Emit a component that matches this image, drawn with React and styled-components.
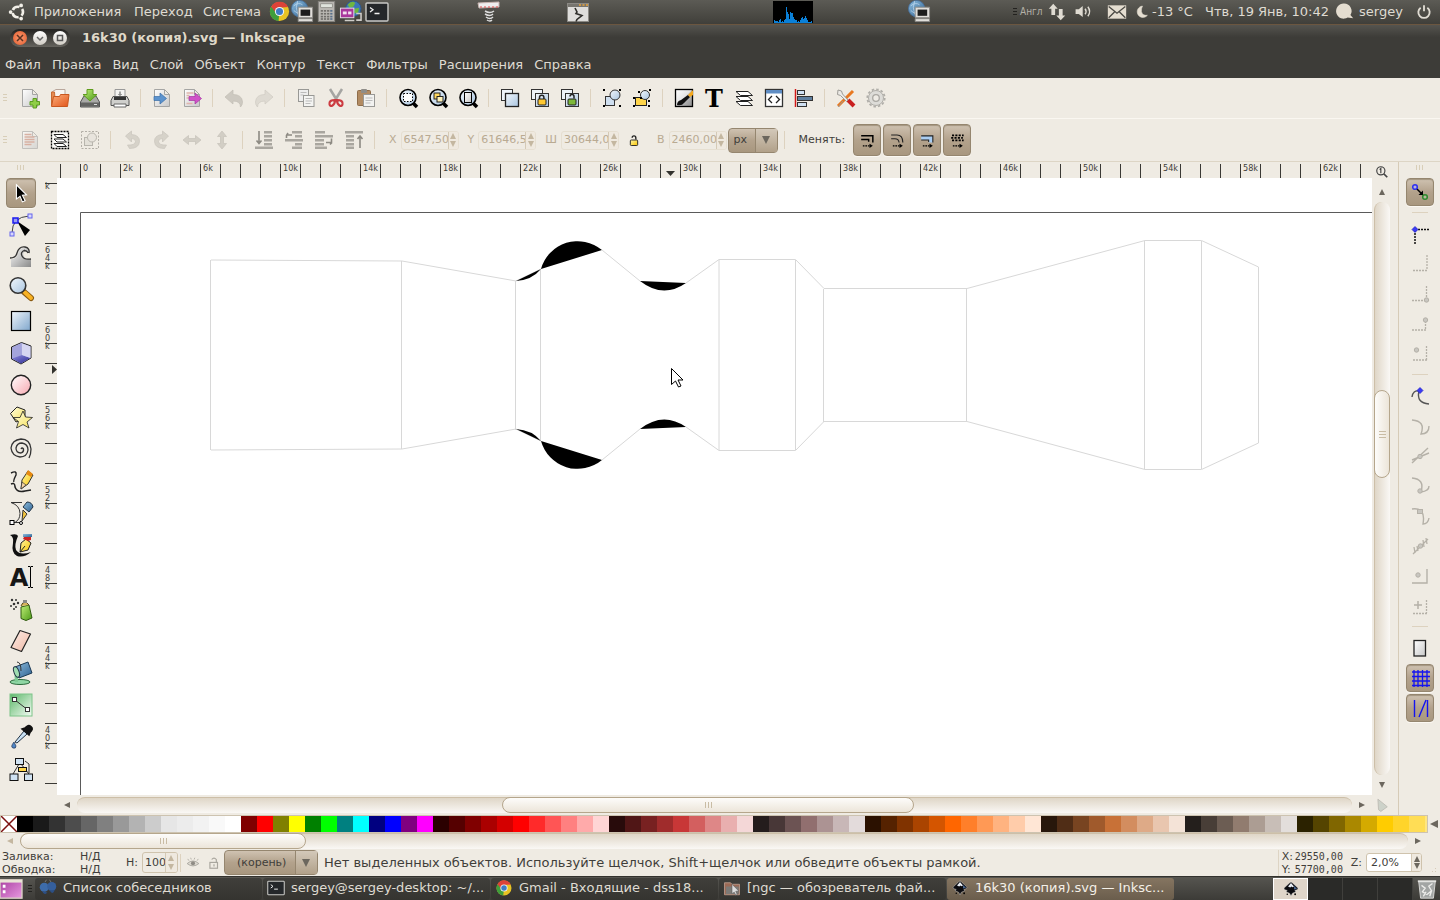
import React from "react";
import styled, { createGlobalStyle, css } from "styled-components";

const Global = createGlobalStyle`
  * { box-sizing: border-box; }
  body { margin: 0; background: #efebe3; overflow: hidden; }
  button, input, select {
    font: inherit; color: inherit; margin: 0; padding: 0; border: 0;
    background: none; border-radius: 0; appearance: none; outline: none; min-width: 0;
  }
  svg { display: block; flex: none; }
`;

const raised = "linear-gradient(#cfc2b1, #b3a28c 50%, #a8977f)";

const Desktop = styled.div`
  display: flex; flex-direction: column; height: 100vh;
  font-family: "DejaVu Sans", sans-serif; font-size: 13px; line-height: 16px;
  color: #3f3e3a; background: #efebe3; white-space: nowrap; cursor: default;
`;

/* ---------- desktop panels ---------- */
const TopPanel = styled.header`
  display: flex; align-items: center; flex: none; height: 25px; padding: 0 8px 1px;
  color: #dfdbd2; background: linear-gradient(#5c5b55, #403f3a);
  border-bottom: 1px solid #6b5640;
`;
const PanelItem = styled.button`
  display: flex; align-items: center; justify-content: flex-start; flex: none;
  height: 23px; width: ${p => p.$w}px; margin-left: ${p => p.$gap || 0}px;
`;
const Spacer = styled.div`flex: 1 1 0;`;
const Layout = styled.span`
  font-family: "DejaVu Sans Condensed", "DejaVu Sans", sans-serif; font-size: 10px; color: #b5b1a8;
`;
const PanelGrip = styled.span`
  flex: none; width: 4px; height: 7px; margin: 0 3px;
  background: repeating-linear-gradient(#23221f 0 1px, transparent 1px 3px);
`;

const BottomPanel = styled.footer`
  display: flex; align-items: center; flex: none; height: 24px;
  background: linear-gradient(#565550, #3c3b37); border-top: 1px solid #33322e; color: #dfdbd2;
`;
const Task = styled.button`
  display: flex; align-items: center; flex: 0 1 227px; height: 22px; margin-right: 1px; padding: 0 0 1px 4px; gap: 6px;
  border-radius: 3px; text-align: left; overflow: hidden;
  background: ${p => (p.$active ? "linear-gradient(#857561, #6a5d4c)" : "linear-gradient(#403f3b, #353430)")};
  color: ${p => (p.$active ? "#f4f0e8" : "#dfdbd2")};
`;
const Workspace = styled.button`
  display: flex; align-items: center; justify-content: center; width: 35px; height: 22px;
  background: ${p => (p.$active ? "#dfd5c9" : "#2a2a28")};
  border: ${p => (p.$active ? "1px solid #fff" : "0")};
  border-right: ${p => (p.$active ? "1px solid #fff" : "1px solid #403f3c")};
`;

/* ---------- window frame ---------- */
const TitleBar = styled.div`
  display: flex; align-items: center; flex: none; height: 27px; padding: 0 10px 2px; gap: 12px;
  background: linear-gradient(#55544f, #3d3c38 45%); color: #dfd8c8; font-weight: bold;
`;
const WindowButtons = styled.div`
  display: flex; align-items: center; gap: 6px; height: 18px; padding: 0 3px; border-radius: 9px;
  background: linear-gradient(#22211f, #65635d);
`;
const WindowButton = styled.button`
  display: grid; place-items: center; width: 14px; height: 14px; border-radius: 50%;
  background: ${p => (p.$close ? "radial-gradient(#ff9a70, #df5a2c)" : "linear-gradient(#fff, #cfcbc3)")};
`;
const MenuBar = styled.nav`
  display: flex; align-items: center; flex: none; height: 26px; padding: 0 5px; gap: 11px;
  background: #3d3c38; color: #dfdbd2;
`;
const MenuItem = styled.button`height: 24px;`;

/* ---------- toolbars ---------- */
const ToolBar = styled.div`
  display: flex; align-items: center; flex: none; height: ${p => p.$h}px;
  border-bottom: 1px solid ${p => p.$line}; font-size: 11px; line-height: 14px;
`;
const Grip = styled.span`
  flex: none;
  ${p => p.$flat
    ? css`width: 8px; height: 5px; margin: 3px auto 7px; background: repeating-linear-gradient(90deg, #d8ceb8 0 1px, transparent 1px 3px);`
    : css`width: 4px; height: 8px; margin: 0 8px 0 3px; background: repeating-linear-gradient(#d8ceb8 0 1px, transparent 1px 3px);`}
`;
const Rule = styled.span`
  flex: none; background: #ddd2bf;
  ${p => p.$flat
    ? css`width: 16px; height: 1px; margin: 5px auto 6px;`
    : css`width: 1px; height: 18px; margin: 0 ${p.$tight ? 5 : 6}px 0 ${p.$tight ? 2 : 5}px;`}
`;
const ToolButton = styled.button`
  display: grid; place-items: center; flex: none; width: 30px; height: 32px;
  opacity: ${p => (p.disabled ? 0.6 : 1)};
`;
const PressedButton = styled.button`
  display: grid; place-items: center; flex: none;
  width: ${p => p.$w || 28}px; height: ${p => p.$h || 28}px; margin: 1px;
  background: ${raised}; border: 1px solid #95866f; border-radius: 4px;
  box-shadow: inset 0 1px 1px #a39580, 0 1px 0 #fbf8f2;
`;
const Field = styled.label`
  display: flex; align-items: center; gap: 4px;
  margin: 0 ${p => p.$after || 0}px 0 ${p => p.$before || 0}px;
  color: ${p => (p.$dim ? "#b9aa92" : "#3f3e3a")};
`;
const SpinFrame = styled.span`
  display: flex; width: ${p => p.$w}px; height: ${p => p.$h || 19}px;
  border: 1px solid ${p => (p.$faint ? "#e6dfd1" : "#cfc3ad")}; border-radius: 3px; overflow: hidden;
  background: ${p => (p.$white ? "#fff" : "transparent")};
`;
const SpinInput = styled.input`
  flex: 1 1 0; width: 0; padding-left: ${p => (p.$pad ? p.$pad : 2)}px; overflow: hidden;
`;
const SpinKeys = styled.span`
  display: flex; flex-direction: column; justify-content: space-evenly; align-items: center;
  flex: none; width: ${p => p.$w || 10}px; border-left: 1px solid #d5cab6; background: #efe9df;
`;
const Combo = styled.span`
  display: flex; align-items: center; flex: none;
  width: ${p => p.$w}px; height: ${p => p.$h}px; margin-right: ${p => p.$after || 0}px;
  background: ${raised}; border: 1px solid #95866f; border-radius: 4px; color: #3f3e3a;
`;
const ComboSelect = styled.select`
  flex: 1; height: 100%; padding-left: ${p => p.$pad}px;
`;
const ComboArrow = styled.span`
  display: grid; place-items: center; width: 22px; height: 100%; pointer-events: none;
  border-left: 1px solid #95866f; background: linear-gradient(#d3c8b9, #b1a18a);
`;

/* ---------- work area ---------- */
const Work = styled.main`display: flex; flex: 1 1 0; min-height: 0;`;
const Toolbox = styled.aside`
  display: flex; flex-direction: column; align-items: center; flex: none; width: 45px; padding: 0 3px 0 0;
`;
const Center = styled.section`display: flex; flex-direction: column; flex: 1 1 0; min-width: 0;`;
const rulerType = css`
  font-family: "DejaVu Sans Condensed", "DejaVu Sans", sans-serif; font-size: 9px; line-height: 8px;
`;
const TopRuler = styled.div`
  position: relative; display: flex; flex: none; height: 16px; padding: 2px 0 0 15px; overflow: hidden;
`;
const TopTick = styled.span`
  flex: none; width: 20px; height: 14px; padding-left: 2px; border-left: 1px solid #3a3935;
  ${rulerType}
`;
const CanvasRow = styled.div`display: flex; flex: 1 1 0; min-height: 0;`;
const SideRuler = styled.div`
  position: relative; display: flex; flex-direction: column; flex: none; width: 12px; overflow: hidden;
  ${rulerType}
`;
const SideStart = styled.span`flex: none; height: 5px; padding-top: 4px;`;
const SideTick = styled.span`
  display: flex; flex-direction: column; flex: none; height: 20px; padding-top: 2px; border-top: 1px solid #3a3935;
`;
const RulerMark = styled.svg`
  position: absolute;
  ${p => (p.$side ? css`left: 7px; top: 187px;` : css`left: 620px; top: 9px;`)}
`;
const Canvas = styled.svg`flex: 1 1 0; width: 0; height: 100%; background: #fff;`;

const ScrollRow = styled.div`
  display: flex; align-items: center; flex: none; height: ${p => p.$h}px;
  padding: 0 ${p => p.$right || 0}px 0 ${p => p.$left || 0}px;
`;
const ScrollArrow = styled.button`
  display: grid; place-items: center; flex: none; width: 20px; height: ${p => (p.$tall ? 20 : 16)}px;
`;
const HTrough = styled.div`
  display: flex; flex: 1 1 0; height: 16px; border-radius: 8px;
  background: linear-gradient(#dfd6c7, #faf8f5); border-top: 1px solid #cdbfa8;
`;
const HSpace = styled.span`flex: ${p => p.$n} 1 0;`;
const thumb = css`
  display: grid; place-items: center; border: 1px solid #b5a68c; border-radius: 8px;
`;
const HThumb = styled.button`
  ${thumb} flex: ${p => p.$n} 1 0; height: 16px; margin-top: -1px;
  background: linear-gradient(#fdfcfa, #ece5d9);
`;
const ThumbMarks = styled.span`
  ${p => p.$flat
    ? css`width: 7px; height: 7px; background: repeating-linear-gradient(#c9bca4 0 1px, transparent 1px 3px);`
    : css`width: 7px; height: 6px; background: repeating-linear-gradient(90deg, #c9bca4 0 1px, transparent 1px 3px);`}
`;
const VScroll = styled.div`
  display: flex; flex-direction: column; align-items: center; flex: none; width: 26px; padding-right: 6px;
`;
const VTrough = styled.div`
  display: flex; flex-direction: column; flex: 1 1 0; width: 16px; border-radius: 8px;
  background: linear-gradient(90deg, #dfd6c7, #faf8f5); border-left: 1px solid #cdbfa8;
`;
const VThumb = styled.button`
  ${thumb} flex: 86 1 0; width: 16px; margin-left: -1px;
  background: linear-gradient(90deg, #fdfcfa, #ece5d9);
`;
const SnapBar = styled.aside`
  display: flex; flex-direction: column; align-items: center; flex: none; width: 42px;
  border-left: 1px solid #d6cbb7;
`;
const SnapButton = styled(ToolButton)`height: 30px;`;

/* ---------- palette and status ---------- */
const PaletteRow = styled.div`display: flex; align-items: center; flex: none;`;
const Palette = styled.div`
  display: flex; flex: 1 1 0; min-width: 0; height: 18px; overflow: hidden; border: 1px solid #cdc3b0;
`;
const Swatch = styled.button`flex: none; width: 16px; height: 16px; background: ${p => p.$c};`;
const PaletteMenu = styled.button`display: grid; place-items: center; flex: none; width: 12px; height: 16px;`;

const Status = styled.div`
  display: flex; align-items: center; flex: none; height: 27px; padding-left: 2px; font-size: 11px; line-height: 13px;
`;
const StyleInfo = styled.dl`
  display: grid; grid-template-columns: 78px 46px; margin: 0;
  dt, dd { margin: 0; }
`;
const Message = styled.output`flex: 1; padding-left: 6px; font-size: 13px; line-height: 16px;`;
const Coords = styled.div`
  display: grid; grid-template-columns: 13px 56px; padding-left: 3px; border-left: 1px solid #ddd4c4;
`;
const Mono = styled.span`font-family: "DejaVu Sans Mono", monospace; font-size: 10px;`;
const SizeGrip = styled.span`
  align-self: flex-end; width: 10px; height: 10px; margin: 0 2px 2px 6px;
  background: radial-gradient(#d5cbb8 1px, transparent 1px) 0 0 / 3px 3px;
  clip-path: polygon(100% 0, 100% 100%, 0 100%);
`;

/* ---------- icons ---------- */
const Gradient = ({ id, a, b }) => (
  <linearGradient id={id} x1="0" y1="0" x2="1" y2="1">
    <stop offset="0" stopColor={a} /><stop offset="1" stopColor={b} />
  </linearGradient>
);
const DefsSvg = styled.svg`position: absolute;`;
const Defs = () => (
  <DefsSvg width="0" height="0" aria-hidden="true">
    <defs>
      <Gradient id="doc" a="#ffffff" b="#c8c8c8" />
      <Gradient id="orange" a="#fbb07c" b="#e2541a" />
      <Gradient id="blue" a="#f2f7fc" b="#a9c5e0" />
      <Gradient id="steel" a="#8fbfe0" b="#2f6190" />
      <Gradient id="yellow" a="#fff6a8" b="#f8c400" />
      <Gradient id="star" a="#fffde0" b="#f6e25c" />
      <Gradient id="green" a="#c0ee78" b="#4b9a16" />
      <Gradient id="grey" a="#fafafa" b="#8a8a8a" />
      <Gradient id="pink" a="#ffffff" b="#f7a8b0" />
      <Gradient id="peach" a="#fdeee8" b="#f0b8a4" />
      <Gradient id="rect" a="#f0f6fb" b="#7fa6cc" />
      <Gradient id="mint" a="#5db86a" b="#f4fbf4" />
      <Gradient id="violet" a="#8d8be0" b="#2c2a90" />
      <Gradient id="magenta" a="#a83ca0" b="#e89ae0" />
    </defs>
  </DefsSvg>
);

const doc = <path d="M4.500 3.500h10l5 5v12h-15z M14.500 3.500v5h5" fill="url(#doc)" stroke="#a5a5a3" />;
const padlock = (x, y, fill, open) => (
  <g transform={`translate(${x} ${y})`}>
    <path d={open ? "M6.500 4V2a2 2 0 0 0-4 0" : "M2 5V3a2.200 2.200 0 0 1 4.400 0v2"} fill="none" stroke="#222" strokeWidth="1.500" />
    <rect x="0.500" y="4.500" width="8" height="6" rx="1" fill={fill} stroke="#222" />
  </g>
);
const lens = (
  <>
    <path d="M17 17l4 4" stroke="#000" strokeWidth="3.500" />
    <circle cx="12" cy="11.500" r="8" fill="url(#blue)" stroke="#000" strokeWidth="1.600" />
  </>
);
const arrowDash = <><path d="M7 19h8" stroke="#000" strokeWidth="1.300" strokeDasharray="2 1" /><path d="M15 16.500l4 2.500-4 2.500z" fill="#000" /></>;
const grey = "#b5b1a8";
const bars = (pts, d) => (
  <>
    {pts.map(([x, y, w], i) => <rect key={i} x={x} y={y} width={w} height="2.500" fill="#a9a69f" />)}
    <path d={d} fill="none" stroke="#8d8a83" strokeWidth="1.600" />
  </>
);
const snapNode = (x, y) => <circle cx={x} cy={y} r="2.200" fill="#c8c6c0" stroke={grey} />;
const globeNet = (
  <>
    <circle cx="9" cy="9" r="8.500" fill="url(#steel)" stroke="#48709c" />
    <path d="M3 6q5-4 9-1M3 11q3 4 7 2M7 1q-3 6 0 14" stroke="#c8def2" fill="none" opacity=".7" />
    <path d="M7.500 7.500h15v11h-15zM7.500 19.500h15v3h-15z" fill="#e0deda" stroke="#8c8a86" />
    <rect x="10" y="10" width="10" height="6.500" fill="#1d1d1d" />
  </>
);
const chrome = (
  <>
    <circle cx="12" cy="12" r="10" fill="#e8c424" />
    <path d="M3.300 7L12 12l-1 10A10 10 0 0 1 3.300 7z" fill="#3f9e3c" />
    <path d="M3.300 7A10 10 0 0 1 21 7.300L12 8 9 14z" fill="#dd4238" />
    <circle cx="12" cy="12" r="4.800" fill="#f4f6f8" /><circle cx="12" cy="12" r="3.700" fill="#3f7cc4" />
  </>
);
const inkLogo = (
  <>
    <path d="M12 2.500Q13.500 3 15 5l5.500 5q2 2-.5 3l-3 1q2 1 1 2l-4 1.500L12 21l-2-3.500L6 16q-1-1 1-2l-3-1q-2.500-1-.5-3L9 5q1.500-2 3-2.500z" fill="#0b0b0f" stroke="#dcdcdc" strokeWidth=".6" />
    <path d="M12 4l4 4.500-2 1-1.500-1L11 10 8 8.500z" fill="#e9eef6" /><path d="M16 8l4 3.500-4 1z" fill="#46648f" />
    <circle cx="7" cy="19" r="1" fill="#000" /><circle cx="17.500" cy="19" r="1.200" fill="#000" />
  </>
);
const terminal = (
  <>
    <rect x="1" y="3" width="22" height="18" rx="1" fill="#24272a" stroke="#c9c9c6" strokeWidth="1.400" />
    <path d="M5 7.500l3 2.300-3 2.300M9.500 13.500h5" fill="none" stroke="#f0f0f0" strokeWidth="1.300" />
  </>
);

const ICONS = {
  ubuntu: <><circle cx="13" cy="12" r="7" fill="none" stroke="#f2efe8" strokeWidth="3.600" strokeDasharray="10.500 4.160" strokeDashoffset="5.250" /><g fill="#f2efe8"><circle cx="3.500" cy="12" r="2.500" /><circle cx="17.500" cy="3.300" r="2.500" /><circle cx="17.500" cy="20.700" r="2.500" /></g></>,
  chrome, globeNet, terminal, inkLogo,
  calc: <><rect x="3.500" y="1.500" width="17" height="21" fill="#b9b7b2" stroke="#83817d" /><rect x="6" y="4" width="12" height="4" fill="#dfe3dc" stroke="#77756f" strokeWidth=".6" />{[10.5, 13.5, 16.5, 19].map(y => [6, 9.3, 12.6, 15.9].map(x => <rect key={x + "-" + y} x={x} y={y} width="2.300" height="1.700" fill={x > 15 ? "#58708c" : "#6f6d69"} />))}</>,
  picture: <><circle cx="15" cy="9" r="8" fill="#3d76b8" stroke="#2c5688" /><path d="M9 5q4-5 8-2l-2 4-4 1zM16 9l5-1-1 5-4 1z" fill="#6fb640" /><rect x="1.500" y="8.500" width="14" height="10" fill="#a9369c" stroke="#e8e0e8" /><rect x="4" y="12" width="4" height="3" fill="#f3dff0" /><rect x="9.500" y="12" width="3.500" height="3" fill="#f3dff0" /><path d="M6 21.500h10M18 14h5v7h-5" stroke="#cfcdc8" fill="none" strokeWidth="1.600" /></>,
  spring: <><path d="M1 3l21-1v5l-20 1z" fill="#eee" stroke="#c9b5b0" /><path d="M3 7h18" stroke="#e05050" strokeDasharray="2 2" /><path d="M8 11q5 3 9 0M8 14q5 3 8 0M9 17q4 3 7 0M10 20q3 2 5 0" stroke="#ddd" fill="none" strokeWidth="1.500" /></>,
  crack: <><rect x="1.500" y="3.500" width="21" height="18" fill="#dedddb" stroke="#8b8984" /><rect x="2" y="4" width="20" height="3" fill="#77756f" /><path d="M13 5h2M16.500 5h2M20 5h2" stroke="#e9a238" strokeWidth="1.500" /><path d="M9 8l2 4-1 1.500 6 2-5 4-1 2" fill="none" stroke="#2e2d2a" strokeWidth="1.600" /></>,
  updown: <path d="M7 1l6 6.500H9.500V16h-5V7.500H1zM17 23l-6-6.500h3.500V8h5v8.500H23z" fill="#dfdbd2" />,
  sound: <><path d="M2 9h4l5-4v14l-5-4H2z" fill="#dfdbd2" /><path d="M14 8.500q2.500 3.500 0 7M17.500 6q4.500 6 0 12" fill="none" stroke="#dfdbd2" strokeWidth="1.800" /></>,
  mail: <><rect x="1" y="4" width="22" height="16" fill="#e4ddd0" /><path d="M2 5.500l10 8 10-8M2 19l7-7M22 19l-7-7" fill="none" stroke="#4a4944" strokeWidth="1.600" /></>,
  moon: <path d="M12 2A10.500 10.500 0 1 0 21 19Q12 20 10 12 9.500 7 12 2z" fill="#e4ddd0" stroke="#e4ddd0" />,
  bubble: <path d="M11 2a9.500 9.500 0 1 0 5 17.500l7 1-3.500-4A9.500 9.500 0 0 0 11 2z" fill="#e4ddd0" />,
  power: <path d="M7 5.500a8.500 8.500 0 1 0 10 0M12 2v9" fill="none" stroke="#dfdbd2" strokeWidth="2.800" />,
  new: <>{doc}<path d="M15 12.500h3.500v3h3V19h-3v3H15v-3h-3v-3.500h3z" fill="#8fce46" stroke="#5c9c22" /></>,
  open: <><path d="M4.500 5.500L8 3.500h9v7h-12z" fill="#f7f5f2" stroke="#b9a79c" /><path d="M3.500 19.500V6h3l1 14z" fill="#e58b52" stroke="#c76a34" /><path d="M5.500 10.500h6l1-2h8.500l-1.500 12h-16z" fill="url(#orange)" stroke="#c8571f" /></>,
  save: <><path d="M6 10h12l3.500 6v5h-19v-5z" fill="#a9a9a6" stroke="#555" /><rect x="3" y="16.500" width="18" height="4" fill="#636361" /><path d="M16 18.500h3" stroke="#ddd" /><path d="M9 3.500h6v5h4L12 15 5 8.500h4z" fill="url(#green)" stroke="#5f9d1c" /></>,
  print: <><path d="M7 3.500h10v8H7z" fill="#f4f4f2" stroke="#999" /><path d="M12 5.500v3M10.500 8l1.500 1.500L13.500 8" stroke="#555" fill="none" /><path d="M5 10.500h14l2 4v5H3v-5z" fill="#cfcfcc" stroke="#555" /><path d="M6 11h12v3H6z" fill="#333" /><path d="M6 18h12v3H6z" fill="#fff" stroke="#666" /></>,
  import: <>{doc}<path d="M4 10.500h6V7l6.500 5.500L10 18v-3.500H4z" fill="#5c93ce" stroke="#3a6ea8" strokeWidth=".7" /></>,
  export: <>{doc}<path d="M6.500 7h7M6.500 9.500h3M6.500 12h3M6.500 17.500h6" stroke="#e0b5ac" strokeWidth="1.500" /><path d="M9 10.500h6V7l6.500 5.500L15 18v-3.500H9z" fill="#d052c8" stroke="#a337a0" strokeWidth=".7" /></>,
  undo: <path d="M3 11l8-7v4.500q9 0 9.500 7.500 0 3-2 5 0-6-7.500-6V18z" fill="#b8b4ab" stroke="#a5a198" strokeWidth=".7" />,
  redo: <path d="M21 11l-8-7v4.500q-9 0-9.500 7.500 0 3 2 5 0-6 7.500-6V18z" fill="#d4d0c8" stroke="#bab6ad" strokeWidth=".7" />,
  copy: <><rect x="4.500" y="3.500" width="10" height="12" fill="#eee" stroke="#989895" /><path d="M6.500 6.500h6M6.500 9h3" stroke="#bbb" /><rect x="9.500" y="9.500" width="10.500" height="11" fill="#f4f4f2" stroke="#989895" /><path d="M11.500 12.500h6.500M11.500 15h6.500M11.500 17.500h5" stroke="#bbb" /></>,
  cut: <><path d="M6 3l8 13M18 3l-8 13" stroke="#a5a5a2" strokeWidth="2.500" /><g fill="none" stroke="#cc3b40" strokeWidth="2.200"><path d="M11 14q-6 0-5.500 4 .5 3 3 1.500T11 14zM13 14q6 0 5.500 4-.5 3-3 1.500T13 14z" /></g></>,
  paste: <><rect x="3.500" y="4.500" width="13" height="15" rx="1" fill="#b28b62" stroke="#8f6d4a" /><rect x="7" y="3" width="6" height="4" rx="1" fill="#8f8d88" /><rect x="9.500" y="8.500" width="11" height="12" fill="#f2f2f0" stroke="#989895" /><path d="M11.500 12h7M11.500 14.500h7M11.500 17h5" stroke="#bbb" /></>,
  zoomSel: <>{lens}<rect x="7.500" y="7.500" width="9" height="8" fill="#fff" stroke="#000" strokeDasharray="1.500 1.500" /></>,
  zoomDraw: <>{lens}<rect x="8" y="7" width="6" height="6" fill="#ffd75e" stroke="#222" /><rect x="11" y="10.500" width="6" height="5.500" fill="#fff1b8" stroke="#222" /></>,
  zoomPage: <>{lens}<rect x="8.500" y="6.500" width="7" height="10" fill="url(#doc)" stroke="#000" /></>,
  duplicate: <><rect x="3.500" y="3.500" width="11" height="11" fill="#eef4fa" stroke="#333" /><rect x="7.500" y="7.500" width="13" height="13" fill="url(#blue)" stroke="#222" strokeWidth="1.300" /></>,
  clone: <><rect x="3.500" y="3.500" width="11" height="10" fill="#eef4fa" stroke="#333" /><rect x="7.500" y="7.500" width="13" height="13" fill="url(#blue)" stroke="#333" />{padlock(9.5, 8.5, "#ffc933")}</>,
  unclone: <><rect x="3.500" y="3.500" width="11" height="10" fill="#eef4fa" stroke="#333" /><rect x="7.500" y="7.500" width="13" height="13" fill="url(#blue)" stroke="#333" />{padlock(9.5, 8.5, "#7cb83a", true)}</>,
  group: <><rect x="5.500" y="10.500" width="9" height="9" fill="#cfdff0" stroke="#333" /><circle cx="15" cy="9" r="5" fill="url(#blue)" stroke="#333" /><path d="M3 4h2M19 4h2M3 20h2M19 20h2" stroke="#000" strokeWidth="2" /></>,
  ungroup: <><rect x="5.500" y="11.500" width="11" height="8" fill="#ffd54a" stroke="#222" /><circle cx="15" cy="9" r="4.500" fill="url(#blue)" stroke="#333" /><path d="M3 12h2M3 20h2M10 12h2M18 15h2M18 20h2M8 6h2M19 4h2" stroke="#000" strokeWidth="2" /></>,
  fill: <><path d="M3.500 3.500h17l-17 17z" fill="url(#doc)" /><path d="M20.500 3.500v17h-17z" fill="url(#grey)" /><rect x="3.500" y="3.500" width="17" height="17" fill="none" stroke="#000" strokeWidth="1.300" /><path d="M5 19q0-4 4-5l7-5 2 2-6 6q-2 3-7 2z" fill="#111" /><path d="M16 9l5-5v5l-3 2z" fill="#f5a81c" /></>,
  text: <text x="12" y="21" textAnchor="middle" fontFamily="DejaVu Serif, serif" fontWeight="bold" fontSize="24" fill="#000">T</text>,
  layers: <g fill="#fff" stroke="#222"><path d="M4 15.500h12l4.500 4h-12z" /><path d="M4 10.500h12l4.500 4h-12z" /><path d="M4 5.500h12l4.500 4h-12z" /></g>,
  xml: <><rect x="3.500" y="3.500" width="17" height="17" fill="#fff" stroke="#333" strokeWidth="1.300" /><rect x="4" y="4" width="16" height="3.500" fill="#5f8dc4" /><path d="M10 10l-3.500 3.500L10 17M14 10l3.500 3.500L14 17" fill="none" stroke="#222" strokeWidth="1.300" /></>,
  align: <><path d="M3.500 3v18" stroke="#d01818" strokeWidth="1.500" /><rect x="5.500" y="4.500" width="7" height="4" fill="#cfe0f2" stroke="#333" /><rect x="5.500" y="10.500" width="15" height="4" fill="#5f7f9f" stroke="#333" /><rect x="5.500" y="16.500" width="9" height="4" fill="#cfe0f2" stroke="#333" /></>,
  tools: <><path d="M4 20L19 5" stroke="#e87820" strokeWidth="3" /><path d="M14 14l6 6" stroke="#c92020" strokeWidth="4" /><path d="M4 4l3.500 1 1 3L14 14l-1.500 1.500-6-6-3-1zM4 21l5-6" fill="#eceae6" stroke="#9d9b96" /></>,
  gear: <><circle cx="12" cy="12" r="8.700" fill="none" stroke="#b0aea9" strokeWidth="1.800" strokeDasharray="2.500 2.050" /><circle cx="12" cy="12" r="7.500" fill="#dddcd8" stroke="#b0aea9" /><circle cx="12" cy="12" r="3.300" fill="#eeebe5" stroke="#aaa8a3" strokeWidth="1.300" /></>,
  selAll: <>{doc}<path d="M6.500 6.500h7M6.500 9h10M6.500 11.500h10M6.500 14h10M6.500 16.500h7" stroke="#c98a78" strokeWidth="1.700" /></>,
  selLayers: <><rect x="3.500" y="3.500" width="17" height="17" fill="#faf9f6" stroke="#000" strokeWidth="1.300" strokeDasharray="2 1" /><g fill="#fff" stroke="#222"><path d="M6 15.500h9l3.500 3H9z" /><path d="M6 11h9l3.500 3H9z" /><path d="M6 6.500h9l3.500 3H9z" /></g></>,
  deselect: <><rect x="3.500" y="3.500" width="17" height="17" fill="none" stroke="#8a877f" strokeDasharray="2 1.500" /><rect x="6.500" y="9.500" width="8" height="8" fill="#dcd9d2" stroke="#95928a" /><circle cx="14" cy="9.500" r="4.500" fill="#e4e1da" stroke="#95928a" /></>,
  rotL: <path d="M5.500 8l6-5v3.500q8 .5 8 7-.5 7-10 7l-2-3.500q7.500.5 8-3.500 0-3-4-3v3.500z" fill="#c6c2b9" stroke="#b0aca3" strokeWidth=".7" />,
  rotR: <path d="M18.500 8l-6-5v3.500q-8 .5-8 7 .5 7 10 7l2-3.500q-7.500.5-8-3.500 0-3 4-3v3.500z" fill="#c6c2b9" stroke="#b0aca3" strokeWidth=".7" />,
  flipH: <path d="M3 12l5.500-4.500v3h7v-3L21 12l-5.500 4.500v-3h-7v3z" fill="#bfbbb2" stroke="#aca89f" strokeWidth=".7" />,
  flipV: <path d="M12 3l4.500 5.500h-3v7h3L12 21l-4.500-5.500h3v-7h-3z" fill="#bfbbb2" stroke="#aca89f" strokeWidth=".7" />,
  toBottom: bars([[12, 3, 8], [12, 7, 8], [12, 11, 8], [12, 15, 8], [3, 18.5, 18]], "M7 3v12M4.500 12.500L7 15.500l2.500-3"),
  lower: bars([[10, 3, 10], [13, 7, 7], [3, 11, 18], [13, 15, 7], [10, 18.5, 10]], "M10 7H5M6 5L4.500 7.500V10"),
  raise: bars([[3, 3, 10], [3, 7, 18], [3, 11, 9], [3, 15, 9], [3, 18.5, 12]], "M14 14.500h5M19.500 10.500v4M18 16.500l2-2"),
  toTop: bars([[3, 3, 18], [4, 7, 8], [4, 11, 8], [4, 15, 8], [4, 18.5, 8]], "M18 20V8M15.500 11L18 8l2.500 3"),
  lock: padlock(7.5, 7.5, "url(#yellow)", true),
  mvStroke: <><path d="M5 7h14v8M5 11.500h9v2.500" fill="none" stroke="#000" strokeWidth="1.800" />{arrowDash}</>,
  mvRadius: <><path d="M5 6h7q7 0 7 9M5 10.500h4.500q4.500 0 5 4.500" fill="none" stroke="#222" strokeWidth="1.400" />{arrowDash}</>,
  mvGrad: <><path d="M5 7h14v8h-5v-3H5z" fill="#a9cdf2" /><path d="M5 7h14v8M5 12h9v2.500" fill="none" stroke="#222" strokeWidth="1.300" />{arrowDash}</>,
  mvPattern: <><path d="M6 6.500h14M5 9.500h14M6 12.500h14" stroke="#000" strokeWidth="2.200" strokeDasharray="2.500 1.500" />{arrowDash}</>,
  select: <path d="M7 3l11 11-4.500.5 3 6-3 1.200-2.500-6L7 18.500z" fill="#000" stroke="#fff" strokeWidth="1.200" />,
  node: <><path d="M3 20Q3 4 20 3" fill="none" stroke="#444" /><path d="M8 8l13 9-5 6z" fill="#000" /><rect x="4" y="5" width="5" height="5" fill="#9a9af0" stroke="#1a1af0" strokeWidth="1.500" /><rect x="19" y="1" width="4" height="4" fill="#d8d8fa" stroke="#6464ee" /><rect x="1" y="19" width="4" height="4" fill="#d8d8fa" stroke="#6464ee" /></>,
  tweak: <><path d="M2 14q6 0 7-6 2-6 8-5 4 1 3 5-2-3-4-2-3 2-1 6 2 3 7 2v8H2z" fill="url(#grey)" /><path d="M1 13q6 0 7-5 2-7 8-6 5 1 4 6M16 5q-5 2-3 6 2 4 9 3M19 8q-1-3-4-2" fill="none" stroke="#333" strokeWidth="1.300" /></>,
  zoom: <><path d="M15 15l7 6" stroke="#8a5a10" strokeWidth="6" strokeLinecap="round" /><path d="M16 15.500l6 5.500" stroke="#f8b224" strokeWidth="4" strokeLinecap="round" /><circle cx="9" cy="8.500" r="7.800" fill="url(#blue)" stroke="#333" strokeWidth="1.600" /></>,
  rect: <rect x="2.500" y="2.500" width="19" height="19" fill="url(#rect)" stroke="#000" strokeWidth="1.200" />,
  box: <><path d="M12.500 1.500L22 5v12l-10 6L2.500 18V6z" fill="#b6b6e4" stroke="#222" /><path d="M3 6.500L12.500 2 13 14 3 18z" fill="#a4a4dc" /><path d="M13 14l8.500 3-9.500 5.500-9-5z" fill="url(#violet)" /><path d="M13 2.500v11.500l8.500 3V5.500z" fill="#d6d6f2" /></>,
  ellipse: <circle cx="12" cy="12" r="9.700" fill="url(#pink)" stroke="#222" strokeWidth="1.400" />,
  star: <><path d="M1.500 8.500L8 2l8 3v8l-9 4z" fill="url(#star)" stroke="#222" /><path d="M14 6l2.500 6 7 .5-5.500 4.500 2 6-6-3.500L7.500 23l2-6.500L4 12.500h7z" fill="url(#star)" stroke="#222" strokeWidth=".8" /></>,
  spiral: <path d="M12 12q1-2 2.500 0 .5 3-2.500 4-5 0-5-5 1-5 6-5 6 1 6 7-1 7-8 7-8-1-9-9 1-8 10-9 9 0 10 10 0 5-2 9" fill="none" stroke="#333" strokeWidth="1.300" />,
  pencil: <><path d="M2 4q6-3 5 2-3 6-2 7M2 15q4-2 4 3 2 6 10 4l6-1" fill="none" stroke="#222" strokeWidth="1.500" /><path d="M12 20l1-9 6-9 5 4-5 9z" fill="url(#yellow)" stroke="#333" /><path d="M12 20l1-7 4 3z" fill="#f7d6a8" stroke="#333" strokeWidth=".7" /><path d="M17 5l5 3 2-3-5-4z" fill="#e88a10" /></>,
  bezier: <><path d="M2 1.500h11M2 1.500q9 3 9 11 0 6-5 9M4 21.500h8" fill="none" stroke="#333" /><path d="M14 6l4-5q5 0 6 5l-4 5z" fill="url(#steel)" stroke="#223344" /><path d="M14 9l4 4-5 7z" fill="#f2c440" stroke="#333" /><rect x="1" y="19.500" width="4" height="4" fill="#fff" stroke="#000" /><circle cx="12" cy="22" r="1.500" fill="#fff" stroke="#000" /></>,
  calli: <><path d="M1 2q7-2 8 1-4 9-2 14 4 6 15 2-7 6-14 4Q2 20 4 10 5 4 1 2z" fill="#111" /><path d="M11 19l1-9 5-4 5 4-3 7z" fill="url(#yellow)" stroke="#222" /><path d="M11 19l5-6" stroke="#222" /><path d="M15 4h7v3l-3 1-5-2z" fill="#c22" /><path d="M14 1h9v3h-9z" fill="url(#steel)" /></>,
  textTool: <><text x="10" y="21" textAnchor="middle" fontFamily="DejaVu Sans, sans-serif" fontWeight="bold" fontSize="24" fill="#161616">A</text><path d="M19 1.500h2l.5.500.5-.5h2M21.500 2v20M19 22.500h2l.5-.5.500.5h2" fill="none" stroke="#000" /></>,
  spray: <><path d="M12 10l8-2 3 13-6 2.500-5-2z" fill="url(#green)" stroke="#2f5a10" /><path d="M12 9q1-4 5-4l3 3" fill="#d8b45c" stroke="#5a4a20" /><rect x="14" y="3" width="4" height="3" fill="#888" /><g fill="#333"><circle cx="3" cy="3" r="1.200" /><circle cx="7" cy="3" r="1" /><circle cx="5" cy="7" r="1.300" /><circle cx="9" cy="6" r="1.200" /><circle cx="2" cy="9" r="1" /><circle cx="7" cy="10" r="1" /><circle cx="5" cy="12" r="1" /></g></>,
  eraser: <path d="M11 1.500l10.500 3.500-9 17.500L2 18.500z" fill="url(#peach)" stroke="#222" strokeWidth="1.200" strokeLinejoin="round" />,
  bucket: <><ellipse cx="11" cy="21" rx="10" ry="2.500" fill="#8fd6a4" stroke="#2c6a3c" /><path d="M6 12q-1 4 0 9h3q0-5 1-8z" fill="#7fcb94" /><path d="M6 6l13-5 4 11-13 5z" fill="url(#steel)" stroke="#1c3a55" /><ellipse cx="7.500" cy="11" rx="2.500" ry="5.500" transform="rotate(-20 7.500 11)" fill="#9fdcb0" stroke="#223344" /><path d="M8 1q4 0 4 9" fill="none" stroke="#333" /></>,
  gradient: <><rect x="1" y="1" width="22" height="22" fill="url(#mint)" stroke="#7cc488" /><path d="M6 7l13 10" stroke="#333" /><rect x="3.500" y="4.500" width="4" height="4" fill="#fff" stroke="#333" /><rect x="16.500" y="14.500" width="4" height="4" fill="#fff" stroke="#333" /></>,
  dropper: <><path d="M6 17l9-11 3 3-10 9z" fill="#c8dff2" stroke="#223344" /><path d="M13 4l3-1q3-4 6-1.500t-1 6L20 10z" fill="#111" stroke="#111" strokeWidth="1.500" /><path d="M5 17q-4 5-1 6t3-2z" fill="#4f86c6" stroke="#223355" strokeWidth=".7" /></>,
  connector: <><path d="M10 7L4 17M12 7l8 10M16 4l4 3v9" stroke="#333" fill="none" /><rect x="6.500" y="1.500" width="8" height="6" fill="#d0e2f2" stroke="#111" /><rect x="9.500" y="10.500" width="8" height="4" fill="#ffd54a" stroke="#111" /><rect x="1" y="17" width="8" height="6.500" fill="#d0e2f2" stroke="#111" /><rect x="15.500" y="17" width="8" height="6.500" fill="#d0e2f2" stroke="#111" /></>,
  snapMain: <><path d="M8 8l7 7" stroke="#000" strokeWidth="1.500" /><path d="M15 10.500V15h-4.500z" fill="#000" /><circle cx="7" cy="7" r="2.300" fill="#b8b4d8" stroke="#3030f0" strokeWidth="1.500" /><circle cx="17" cy="17" r="2.300" fill="#b5b89a" stroke="#2f8a2f" strokeWidth="1.500" /></>,
  snBox: <><path d="M7 7.500h14M7 8v14" stroke="#111" strokeWidth="1.500" strokeDasharray="2 1" /><path d="M7 4.500l3 3-3 3-3-3z" fill="#3a3af5" stroke="#2020c0" strokeWidth=".7" /></>,
  snEdge: <path d="M5 18.500h15M19 3v15" stroke={grey} strokeWidth="1.300" strokeDasharray="2 1" />,
  snCorner: <><path d="M4 18.500h15M18.500 4v14" stroke={grey} strokeWidth="1.300" strokeDasharray="2 1" />{snapNode(18.5, 18)}</>,
  snMid: <><path d="M4 18h14M17.500 9v9" stroke={grey} strokeWidth="1.300" strokeDasharray="2 1" />{snapNode(17.5, 8)}</>,
  snCenter: <><path d="M5 18h14M18.500 4v14" stroke={grey} strokeWidth="1.300" strokeDasharray="2 1" />{snapNode(8.5, 8)}</>,
  snNode: <><path d="M4 13q1-7 7-6M11 7q-3 12 10 13" fill="none" stroke="#555" strokeWidth="1.400" /><path d="M12 3.500l3 3-3 3-3-3z" fill="#3a3af5" stroke="#2020c0" strokeWidth=".7" /></>,
  snPath: <path d="M4 6q14 1 9 14 8 0 8-8" fill="none" stroke={grey} strokeWidth="1.400" />,
  snCross: <><path d="M4 19L20 4M4 16l17-7" stroke={grey} strokeWidth="1.400" />{snapNode(12, 12.5)}</>,
  snCusp: <><path d="M4 4q13 1 9 14 8-1 8-6" fill="none" stroke={grey} strokeWidth="1.400" />{snapNode(12, 17)}</>,
  snSmooth: <><path d="M4 5q14-2 11 15 5 0 6-6" fill="none" stroke={grey} strokeWidth="1.400" /><rect x="9.500" y="5.500" width="5" height="4" fill="#c8c6c0" stroke={grey} /></>,
  snLine: <><path d="M5 20l15-15M6 13l1 6M9 12l1 5M15 6l1 7M18 4l1 6" stroke={grey} strokeWidth="1.300" />{snapNode(12.5, 12)}</>,
  snObj: <><path d="M4 19h15V5" fill="none" stroke={grey} strokeWidth="1.400" />{snapNode(10, 11)}</>,
  snRot: <><path d="M5 19.500h14M18.500 6v13" stroke={grey} strokeWidth="1.300" strokeDasharray="2 1" /><path d="M10 7v8M6 11h8" stroke={grey} strokeWidth="1.500" /></>,
  snPage: <rect x="6" y="4.500" width="11.500" height="15.500" fill="url(#doc)" stroke="#222" strokeWidth="1.300" />,
  snGrid: <path d="M6 4v17M10 4v17M14.500 4v17M19 4v17M4 6h18M4 10.500h18M4 15h18M4 19.500h18" stroke="#1414f0" strokeWidth="1.300" />,
  snGuide: <path d="M6.500 4v17M19.500 4v17M11 21l7-17" stroke="#1414f0" strokeWidth="1.400" />,
  zoomOne: <><circle cx="10" cy="10" r="7" fill="none" stroke="#444" strokeWidth="2" /><path d="M15 15l6 6" stroke="#444" strokeWidth="3" /><path d="M8 8l2-2v8" fill="none" stroke="#444" strokeWidth="2" /></>,
  cms: <path d="M5 2l16 13-11 8-4-3z" fill="#cdd2c9" stroke="#bdbab2" strokeWidth="1.500" />,
  eye: <><path d="M2 13q10-9 20 0-10 8-20 0z" fill="#dedad2" stroke="#a5a29a" strokeWidth="1.500" /><circle cx="12" cy="12.500" r="3.500" fill="#8f8c85" /><path d="M5 8L3 5M9 6L8 3M14 6l1-3M19 8l2-3" stroke="#a5a29a" strokeWidth="1.300" /></>,
  layerLock: <g fill="none" stroke="#a9a69e" strokeWidth="2"><rect x="5" y="11" width="13" height="10" /><path d="M16 11V6q-4-5-8 0M12 14v4" /></g>,
  showDesk: <><rect x="0" y="2" width="24" height="20" fill="url(#magenta)" stroke="#d8d0c4" strokeWidth="1.500" /><path d="M0 3.500h24" stroke="#e9e4d6" strokeWidth="3" /><path d="M3 9h3M3 15h3" stroke="#fff" strokeWidth="3.500" /></>,
  bulbs: <><circle cx="7" cy="11" r="6" fill="#3d6cab" /><circle cx="17" cy="10" r="6" fill="#355f9c" /><path d="M4 16q3 7 7 2zM14 15q4 7 7 0z" fill="#2c4f84" /><path d="M8 4l2-3M16 4l-2-3" stroke="#888" /></>,
  folder: <><path d="M2 5h8l2 2h10v14H2z" fill="#9c6a56" stroke="#c4a595" /><path d="M4 10h17v10H4z" fill="#7d7a76" /><path d="M12 7l9 9-4 .5 2 4-2 1-2-4-3 2z" fill="#ddd" stroke="#555" strokeWidth=".7" /></>,
  trash: <><path d="M3 4h18l-2 18H5z" fill="#a2a5a4" stroke="#dcdcda" /><path d="M6 8l4 3-3 4 5 3 5-4-3-5 4-3M8 20l3-5M15 20l2-6" stroke="#ececea" strokeWidth="1.500" fill="none" /><path d="M2 3.500h20" stroke="#e4e4e2" strokeWidth="2" /></>,
};
const IconSvg = styled.svg`overflow: visible;`;
const Icon = ({ name, size = 24 }) => (
  <IconSvg width={size} height={size} viewBox="0 0 24 24" fill="none" aria-hidden="true">
    {ICONS[name]}
  </IconSvg>
);
const TRI = { up: "M0 6L3 0l3 6z", down: "M0 0h6L3 6z", left: "M6 0v6L0 3z", right: "M0 0v6l6-3z" };
const Tri = ({ dir, size = 6, color = "#6c675e" }) => (
  <svg width={size} height={size} viewBox="0 0 6 6" aria-hidden="true"><path d={TRI[dir]} fill={color} /></svg>
);

/* ---------- data ---------- */
const MENUS = ["Файл", "Правка", "Вид", "Слой", "Объект", "Контур", "Текст", "Фильтры", "Расширения", "Справка"];
const COMMANDS = [
  ["new", "open", "save", "print"], ["import", "export"], ["undo", "redo"], ["copy", "cut", "paste"],
  ["zoomSel", "zoomDraw", "zoomPage"], ["duplicate", "clone", "unclone"], ["group", "ungroup"],
  ["fill", "text", "layers", "xml", "align"], ["tools", "gear"],
];
const CONTROLS = [
  ["selAll", "selLayers", "deselect"], ["rotL", "rotR", "flipH", "flipV"], ["toBottom", "lower", "raise", "toTop"],
];
const FADED = new Set(["undo", "redo", "selAll", "deselect", "rotL", "rotR", "flipH", "flipV"]);
const TOOLS = ["node", "tweak", "zoom", "rect", "box", "ellipse", "star", "spiral", "pencil", "bezier", "calli",
  "textTool", "spray", "eraser", "bucket", "gradient", "dropper", "connector"];
const SNAPS = [
  ["snBox", "snEdge", "snCorner", "snMid", "snCenter"],
  ["snNode", "snPath", "snCross", "snCusp", "snSmooth", "snLine", "snObj", "snRot"],
];
const COLORS = ("000 1a1a1a 333 4d4d4d 666 808080 999 b3b3b3 ccc e6e6e6 ececec f2f2f2 f9f9f9 fff 800000 f00 808000 ff0 " +
  "008000 0f0 008080 0ff 000080 00f 800080 f0f 2b0000 500 800000 a00 d40000 f00 ff2a2a f55 ff8080 faa ffd5d5 280b0b " +
  "501616 782121 a02c2c c83737 d35f5f de8787 e9afaf f4d7d7 241c1c 483737 6c5353 916f6f ac9393 c8b7b7 e3dbdb 2b1100 " +
  "520 803300 a40 d45500 f60 ff7f2a f95 ffb380 fca ffe6d5 28170b 502d16 784421 a05a2c c87137 d38d5f deaa87 e9c6af " +
  "f4e3d7 241f1c 483e37 6c5d53 917c6f ac9d93 c8beb7 e3dedb 2b2200 540 806600 a80 d4aa00 fc0 ffd42a fd5 ffe680").split(" ");
const TASKS = [
  ["bulbs", "Список собеседников"], ["terminal", "sergey@sergey-desktop: ~/..."],
  ["chrome", "Gmail - Входящие - dss18..."], ["folder", "[ngc — обозреватель фай..."],
  ["inkLogo", "16k30 (копия).svg — Inksc..."],
];
const topLabel = i => (i === 1 ? "0" : i >= 3 && (i - 3) % 4 === 0 ? `${i - 1}k` : "");
const sideLabel = i => (i % 4 === 3 ? `${64 - (i - 3)}k` : "");
const LOAD = [3, 2, 2, 2, 1, 3, 4, 1, 2, 1, 3, 4, 16, 11, 9, 4, 11, 10, 10, 6, 4, 3, 3, 1, 2, 1, 3, 5, 6, 4, 5, 7, 5, 3, 1, 1, 1, 2];

const Spin = ({ label, value, w, before, after }) => (
  <Field $dim $before={before} $after={after}>
    {label}
    <SpinFrame $w={w} $faint>
      <SpinInput defaultValue={value} readOnly />
      <SpinKeys><Tri dir="up" color="#c4b7a0" /><Tri dir="down" color="#c4b7a0" /></SpinKeys>
    </SpinFrame>
  </Field>
);
const Groups = ({ groups, trail }) => groups.map((g, i) => (
  <React.Fragment key={i}>
    {i > 0 && <Rule />}
    {g.map(n => <ToolButton key={n} aria-label={n} disabled={FADED.has(n)}><Icon name={n} /></ToolButton>)}
    {trail && i === groups.length - 1 && <Rule />}
  </React.Fragment>
));

const LINE = "#d8d8d8";
const half = "M211 260L402 261 516 281 541 269M602 250L640 281M686 283L719 259.500H795.500L824 288.500H967L1145 240.500H1201.500L1258.500 267";
const solid = "M516 281Q532 280 541 269zM541 269A38 38 0 0 1 602 250zM640 281Q663 299 686 283z";
const Drawing = () => (
  <Canvas role="img" aria-label="drawing">
    <g transform="translate(-57 -178)">
      <path d="M2000 212.500H80.500V2000" fill="none" stroke="#5a5a5a" />
      <g fill="none" stroke={LINE}>
        <path d={half} /><path d={half} transform="matrix(1 0 0 -1 0 710)" />
        <path d="M210.500 260V450M401.500 261V449M515.500 281V430M540.500 269V441M719 260V450M795.500 260V450M823.500 289V422M966.500 289V422M1144.500 241V469M1201.500 241V469M1258.500 267V443" />
      </g>
      <path d={solid} /><path d={solid} transform="matrix(1 0 0 -1 0 710)" />
      <path d="M671.500 368.500v16l4-3.500 3 6 2.500-1-3-6h5z" fill="#fff" stroke="#000" />
    </g>
  </Canvas>
);

export default function App() {
  return (
    <Desktop>
      <Global />
      <Defs />
      <TopPanel>
        <PanelItem $w={26} aria-label="menu"><Icon name="ubuntu" size={18} /></PanelItem>
        <PanelItem $w={100}>Приложения</PanelItem>
        <PanelItem $w={69}>Переход</PanelItem>
        <PanelItem $w={65}>Система</PanelItem>
        <PanelItem $w={23} aria-label="browser"><Icon name="chrome" size={23} /></PanelItem>
        <PanelItem $w={23} aria-label="remote"><Icon name="globeNet" size={23} /></PanelItem>
        <PanelItem $w={23} $gap={1} aria-label="calculator"><Icon name="calc" size={23} /></PanelItem>
        <PanelItem $w={23} $gap={1} aria-label="screens"><Icon name="picture" size={23} /></PanelItem>
        <PanelItem $w={24} $gap={3} aria-label="terminal"><Icon name="terminal" /></PanelItem>
        <PanelItem $w={24} $gap={88} aria-label="applet"><Icon name="spring" /></PanelItem>
        <PanelItem $w={24} $gap={65} aria-label="force quit"><Icon name="crack" /></PanelItem>
        <PanelItem $w={40} $gap={183} aria-label="system load">
          <svg width="40" height="22" aria-hidden="true">
            <rect width="40" height="22" fill="#000" />
            {LOAD.map((v, i) => <rect key={i} x={i + 1} y={22 - v} width="1" height={v} fill="#0a80d8" />)}
          </svg>
        </PanelItem>
        <PanelItem $w={24} $gap={95} aria-label="network"><Icon name="globeNet" size={23} /></PanelItem>
        <Spacer />
        <PanelGrip />
        <PanelItem $w={28}><Layout>Англ</Layout></PanelItem>
        <PanelItem $w={26} aria-label="transfer"><Icon name="updown" size={18} /></PanelItem>
        <PanelItem $w={33} aria-label="sound"><Icon name="sound" size={19} /></PanelItem>
        <PanelItem $w={29} aria-label="mail"><Icon name="mail" size={20} /></PanelItem>
        <PanelItem $w={16} aria-label="weather"><Icon name="moon" size={13} /></PanelItem>
        <PanelItem $w={53}>-13 °C</PanelItem>
        <PanelItem $w={130}>Чтв, 19 Янв, 10:42</PanelItem>
        <PanelItem $w={24} aria-label="status"><Icon name="bubble" size={19} /></PanelItem>
        <PanelItem $w={57}>sergey</PanelItem>
        <PanelItem $w={16} aria-label="power"><Icon name="power" size={16} /></PanelItem>
      </TopPanel>

      <TitleBar>
        <WindowButtons>
          <WindowButton $close aria-label="close"><svg width="8" height="8"><path d="M1 1l6 6M7 1L1 7" stroke="#5a3222" strokeWidth="1.500" /></svg></WindowButton>
          <WindowButton aria-label="minimize"><svg width="8" height="8"><path d="M1 3l3 3 3-3" fill="none" stroke="#666" strokeWidth="1.500" /></svg></WindowButton>
          <WindowButton aria-label="maximize"><svg width="8" height="8"><rect x="1.500" y="1.500" width="5" height="5" fill="none" stroke="#555" strokeWidth="1.500" /></svg></WindowButton>
        </WindowButtons>
        16k30 (копия).svg — Inkscape
      </TitleBar>
      <MenuBar>{MENUS.map(m => <MenuItem key={m}>{m}</MenuItem>)}</MenuBar>

      <ToolBar $h={41} $line="#faf7f1"><Grip /><Groups groups={COMMANDS} /></ToolBar>
      <ToolBar $h={43} $line="#ddd5c5">
        <Grip /><Groups groups={CONTROLS} trail />
        <Spin label="X" value="6547,50" w={58} before={8} after={9} />
        <Spin label="Y" value="61646,5" w={58} after={9} />
        <Spin label="Ш" value="30644,0" w={58} />
        <ToolButton aria-label="lock ratio"><Icon name="lock" size={22} /></ToolButton>
        <Spin label="В" value="2460,00" w={58} before={8} after={1} />
        <Combo $w={50} $h={25} $after={1}>
          <ComboSelect $pad={5} aria-label="units" defaultValue="px"><option>px</option></ComboSelect>
          <ComboArrow><Tri dir="down" size={8} /></ComboArrow>
        </Combo>
        <Rule />
        <Field as="span" $before={8} $after={7}>Менять:</Field>
        {["mvStroke", "mvRadius", "mvGrad", "mvPattern"].map(n => (
          <PressedButton key={n} $h={32} aria-label={n}><Icon name={n} size={20} /></PressedButton>
        ))}
      </ToolBar>

      <Work>
        <Toolbox>
          <Grip $flat />
          <PressedButton $w={30} $h={30} aria-label="select"><Icon name="select" size={22} /></PressedButton>
          {TOOLS.map(n => <ToolButton key={n} aria-label={n}><Icon name={n} /></ToolButton>)}
        </Toolbox>
        <Center>
          <TopRuler>
            {Array.from({ length: 66 }, (_, i) => <TopTick key={i}>{topLabel(i)}</TopTick>)}
            <RulerMark width="11" height="6"><path d="M1 0h9L5.500 5z" fill="#33322e" /></RulerMark>
          </TopRuler>
          <CanvasRow>
            <SideRuler>
              <SideStart>k</SideStart>
              {Array.from({ length: 31 }, (_, i) => (
                <SideTick key={i}>{[...sideLabel(i)].map((c, j) => <span key={j}>{c}</span>)}</SideTick>
              ))}
              <RulerMark $side width="6" height="10"><path d="M0 0v9l5-4.500z" fill="#33322e" /></RulerMark>
            </SideRuler>
            <Drawing />
          </CanvasRow>
          <ScrollRow $h={20} $left={12}>
            <ScrollArrow aria-label="left"><Tri dir="left" /></ScrollArrow>
            <HTrough><HSpace $n={425} /><HThumb $n={410} aria-label="scroll"><ThumbMarks /></HThumb><HSpace $n={438} /></HTrough>
            <ScrollArrow aria-label="right"><Tri dir="right" /></ScrollArrow>
          </ScrollRow>
        </Center>
        <VScroll>
          <ScrollArrow $tall aria-label="zoom page"><Icon name="zoomOne" size={14} /></ScrollArrow>
          <ScrollArrow $tall aria-label="up"><Tri dir="up" /></ScrollArrow>
          <VTrough><HSpace $n={189} /><VThumb aria-label="scroll"><ThumbMarks $flat /></VThumb><HSpace $n={298} /></VTrough>
          <ScrollArrow $tall aria-label="down"><Tri dir="down" /></ScrollArrow>
          <ScrollArrow $tall aria-label="colour management"><Icon name="cms" size={14} /></ScrollArrow>
        </VScroll>
        <SnapBar>
          <Grip $flat />
          <PressedButton aria-label="snap"><Icon name="snapMain" /></PressedButton>
          {SNAPS.map((g, i) => (
            <React.Fragment key={i}>
              <Rule $flat />
              {g.map(n => <SnapButton key={n} aria-label={n}><Icon name={n} /></SnapButton>)}
            </React.Fragment>
          ))}
          <Rule $flat />
          <SnapButton aria-label="snPage"><Icon name="snPage" /></SnapButton>
          <PressedButton aria-label="snGrid"><Icon name="snGrid" /></PressedButton>
          <PressedButton aria-label="snGuide"><Icon name="snGuide" /></PressedButton>
        </SnapBar>
      </Work>

      <PaletteRow>
        <Palette>
          <Swatch $c="#fff" aria-label="none"><svg width="16" height="16"><path d="M0 0l16 16M16 0L0 16" stroke="#7c1010" strokeWidth="1.500" /></svg></Swatch>
          {COLORS.map((c, i) => <Swatch key={i} $c={`#${c}`} aria-label={`#${c}`} />)}
        </Palette>
        <PaletteMenu aria-label="palette menu"><Tri dir="left" size={8} /></PaletteMenu>
      </PaletteRow>
      <ScrollRow $h={16} $right={12}>
        <ScrollArrow aria-label="left"><Tri dir="left" color="#c4b7a0" /></ScrollArrow>
        <HTrough><HThumb $n={284} aria-label="scroll"><ThumbMarks /></HThumb><HSpace $n={1102} /></HTrough>
        <ScrollArrow aria-label="right"><Tri dir="right" /></ScrollArrow>
      </ScrollRow>

      <Status>
        <StyleInfo><dt>Заливка:</dt><dd>Н/Д</dd><dt>Обводка:</dt><dd>Н/Д</dd></StyleInfo>
        <Field $dim={false}>
          Н:
          <SpinFrame $w={36} $h={21}>
            <SpinInput defaultValue="100" disabled />
            <SpinKeys $w={12}><Tri dir="up" color="#c4b7a0" /><Tri dir="down" color="#c4b7a0" /></SpinKeys>
          </SpinFrame>
        </Field>
        <Rule $tight />
        <PanelItem $w={21} aria-label="visible"><Icon name="eye" size={14} /></PanelItem>
        <PanelItem $w={17} aria-label="lock layer"><Icon name="layerLock" size={14} /></PanelItem>
        <Combo $w={94} $h={25}>
          <ComboSelect $pad={12} aria-label="layer" defaultValue="(корень)"><option>(корень)</option></ComboSelect>
          <ComboArrow><Tri dir="down" size={8} /></ComboArrow>
        </Combo>
        <Message>Нет выделенных объектов. Используйте щелчок, Shift+щелчок или обведите объекты рамкой.</Message>
        <Coords><span>X:</span><Mono>29550,00</Mono><span>Y:</span><Mono>57700,00</Mono></Coords>
        <Field>
          Z:
          <SpinFrame $w={56} $white>
            <SpinInput $pad={4} defaultValue="2,0%" />
            <SpinKeys><Tri dir="up" /><Tri dir="down" /></SpinKeys>
          </SpinFrame>
        </Field>
        <SizeGrip />
      </Status>

      <BottomPanel>
        <PanelItem $w={25} aria-label="show desktop"><Icon name="showDesk" size={22} /></PanelItem>
        <PanelGrip />
        {TASKS.map(([icon, label], i) => (
          <Task key={label} $active={i === 4}><Icon name={icon} size={18} /><span>{label}</span></Task>
        ))}
        <Spacer />
        <Workspace $active aria-label="1"><Icon name="inkLogo" size={18} /></Workspace>
        <Workspace aria-label="2" /><Workspace aria-label="3" /><Workspace aria-label="4" />
        <PanelItem $w={24} $gap={3} aria-label="trash"><Icon name="trash" size={22} /></PanelItem>
      </BottomPanel>
    </Desktop>
  );
}
